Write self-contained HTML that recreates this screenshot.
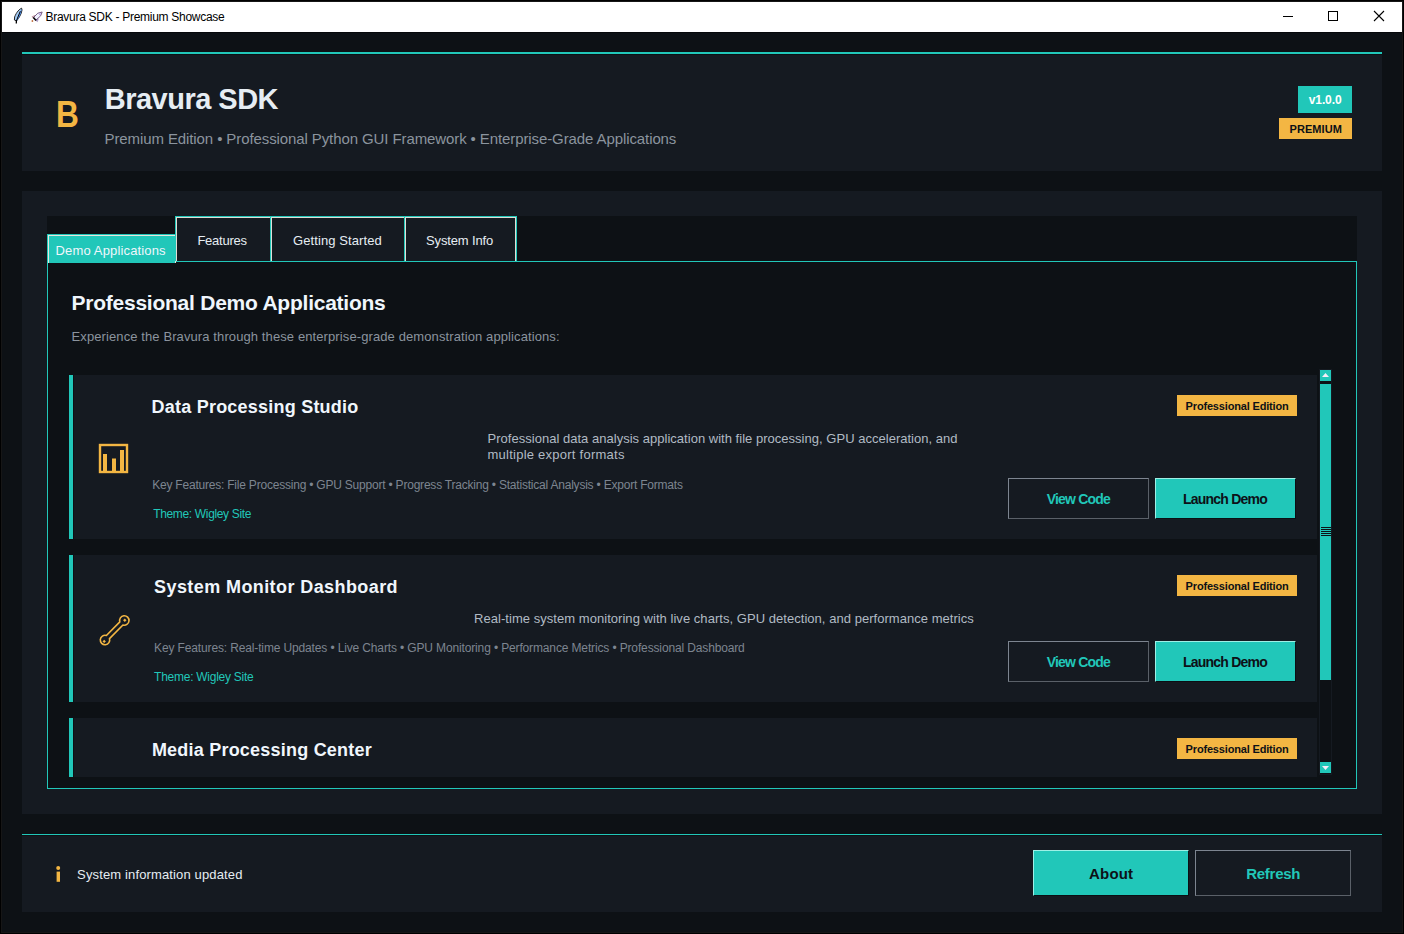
<!DOCTYPE html>
<html><head><meta charset="utf-8">
<style>
*{margin:0;padding:0;box-sizing:border-box}
html,body{width:1404px;height:934px;overflow:hidden;background:#000}
body{position:relative;font-family:"Liberation Sans",sans-serif}
.a{position:absolute}
.t{position:absolute;white-space:nowrap;line-height:1}
</style></head><body>
<div class="a" style="left:0;top:0;width:1404px;height:934px;background:#000"></div>
<div class="a" style="left:1px;top:1px;width:1402px;height:932px;background:#161616"></div>
<div class="a" style="left:2px;top:2px;width:1400px;height:930px;background:#0d1115"></div>
<!-- title bar -->
<div class="a" style="left:2px;top:2px;width:1400px;height:30px;background:#ffffff"></div>
<div class="a" style="left:2px;top:32px;width:1400px;height:1px;background:#06080b"></div>
<svg class="a" style="left:0;top:0" width="1404" height="34">
  <!-- feather -->
  <path d="M21.6 8.2 C19.5 9 16.5 12 14.6 17 L14.4 20 L16.5 21 C19 18 21.5 14 22 10 Z" fill="#a2caf4" stroke="#111" stroke-width="0.9"/>
  <path d="M21.4 9.2 C20 12.5 18.6 16 16.8 20.4 L17.3 20.6 C19.4 17.4 21 13.6 21.5 10 Z" fill="#3f83e6"/>
  <path d="M20.3 11.2 L16.3 21" stroke="#000" stroke-width="1"/>
  <path d="M16.4 20.5 L16.3 23.6" stroke="#000" stroke-width="1.3"/>
  <!-- rocket -->
  <path d="M35 15.6 L32.2 16.6 L33.2 18.2 Z" fill="#e6e6ff" stroke="#a05a5a" stroke-width="0.6"/>
  <path d="M38.2 18.8 L37.4 21.5 L35.9 20.3 Z" fill="#e6e6ff" stroke="#7a5aa0" stroke-width="0.6"/>
  <path d="M42.2 12 L37.8 13.2 L33.6 17.4 L35.9 20.1 L40.6 15.9 Z" fill="#f0f2ff" stroke="#5a3a6a" stroke-width="0.8"/>
  <path d="M33.4 17.6 L36 20.6" stroke="#000" stroke-width="1.5"/>
  <circle cx="40" cy="14.2" r="1" fill="#b8a0e8"/>
  <circle cx="32.4" cy="21" r="0.9" fill="#c07040"/>
  <!-- minimize -->
  <rect x="1283" y="16" width="10" height="1" fill="#000"/>
  <!-- maximize -->
  <rect x="1328.5" y="11.5" width="9" height="9" fill="none" stroke="#000" stroke-width="1"/>
  <!-- close -->
  <path d="M1374 11 L1384 21 M1384 11 L1374 21" stroke="#000" stroke-width="1.1"/>
</svg>

<!-- header panel -->
<div class="a" style="left:22px;top:52px;width:1360px;height:2px;background:#21c7b9"></div>
<div class="a" style="left:22px;top:55px;width:1360px;height:116px;background:#151a21"></div>
<div class="a" style="left:1298px;top:86px;width:54px;height:27px;background:#21c7b9"></div>
<div class="a" style="left:1279px;top:118px;width:73px;height:21px;background:#f3b643"></div>

<!-- main panel -->
<div class="a" style="left:22px;top:191px;width:1360px;height:623px;background:#151a21"></div>
<div class="a" style="left:47px;top:216px;width:1310px;height:46px;background:#0d1115"></div>
<div class="a" style="left:47px;top:261px;width:1310px;height:528px;background:#0d1115;border:1px solid #21c7b9"></div>

<!-- tabs -->
<div class="a" style="left:47px;top:234px;width:129px;height:29px;background:#21c7b9;border-top:1px solid #21c7b9;border-left:1px solid #21c7b9;box-shadow:inset 1px 1px 0 #e8e6dc,inset -1px 0 0 #e8e6dc"></div>
<div class="a" style="left:175px;top:216px;width:96px;height:45px;background:#151a21;border-top:1px solid #21c7b9;border-left:1px solid #21c7b9;box-shadow:inset 1px 1px 0 #e0ddd5,inset -1px 0 0 #e0ddd5"></div>
<div class="a" style="left:270px;top:216px;width:135px;height:45px;background:#151a21;border-top:1px solid #21c7b9;border-left:1px solid #21c7b9;box-shadow:inset 1px 1px 0 #e0ddd5,inset -1px 0 0 #e0ddd5"></div>
<div class="a" style="left:404px;top:216px;width:113px;height:45px;background:#151a21;border-top:1px solid #21c7b9;border-left:1px solid #21c7b9;border-right:1px solid #21c7b9;box-shadow:inset 1px 1px 0 #e0ddd5,inset -1px 0 0 #e0ddd5"></div>

<!-- cards (clipped) -->
<div class="a" style="left:48px;top:262px;width:1308px;height:515px;overflow:hidden">
  <div class="a" style="left:21px;top:113px;width:4px;height:164px;background:#21c7b9"></div>
  <div class="a" style="left:26px;top:113px;width:1243px;height:164px;background:#151a21"></div>
  <div class="a" style="left:21px;top:293px;width:4px;height:147px;background:#21c7b9"></div>
  <div class="a" style="left:26px;top:293px;width:1243px;height:147px;background:#151a21"></div>
  <div class="a" style="left:21px;top:456px;width:4px;height:100px;background:#21c7b9"></div>
  <div class="a" style="left:26px;top:456px;width:1243px;height:100px;background:#151a21"></div>
</div>

<!-- card 1 widgets -->
<svg class="a" style="left:96px;top:440px" width="36" height="36">
  <rect x="4" y="5" width="27" height="27" fill="none" stroke="#f3b643" stroke-width="2.4"/>
  <rect x="7" y="14" width="4" height="18" fill="#f3b643"/>
  <rect x="16" y="18.5" width="4" height="14" fill="#f3b643"/>
  <rect x="24" y="10" width="4" height="22" fill="#f3b643"/>
</svg>
<div class="a" style="left:1177px;top:395px;width:120px;height:21px;background:#f3b643"></div>
<div class="a" style="left:1008px;top:478px;width:141px;height:41px;background:#151a21;border:1px solid #7d8590;border-right-color:#5a6068;border-bottom-color:#5a6068"></div>
<div class="a" style="left:1155px;top:478px;width:141px;height:41px;background:#21c7b9;border:1px solid #9ef0e6;border-right-color:#0b0f14;border-bottom-color:#0b0f14"></div>

<!-- card 2 widgets -->
<svg class="a" style="left:96px;top:611px" width="38" height="38">
  <path d="M10.38 24.51 L23.81 10.88 A4.7 4.7 0 1 1 26.92 13.99 L13.49 27.62 A4.7 4.7 0 1 1 10.38 24.51 Z" fill="none" stroke="#f3b643" stroke-width="1.6" stroke-linejoin="round"/>
  <rect x="27.6" y="8" width="2.4" height="2.4" fill="#f3b643" transform="rotate(45 28.8 9.2)"/>
  <rect x="7" y="29.2" width="2.4" height="2.4" fill="#f3b643" transform="rotate(45 8.2 30.4)"/>
</svg>
<div class="a" style="left:1177px;top:575px;width:120px;height:21px;background:#f3b643"></div>
<div class="a" style="left:1008px;top:641px;width:141px;height:41px;background:#151a21;border:1px solid #7d8590;border-right-color:#5a6068;border-bottom-color:#5a6068"></div>
<div class="a" style="left:1155px;top:641px;width:141px;height:41px;background:#21c7b9;border:1px solid #9ef0e6;border-right-color:#0b0f14;border-bottom-color:#0b0f14"></div>

<!-- card 3 badge -->
<div class="a" style="left:1177px;top:738px;width:120px;height:21px;background:#f3b643"></div>

<!-- scrollbar -->
<div class="a" style="left:1319px;top:369px;width:13px;height:406px;background:#0d1115;border:1px solid #151a21"></div>
<div class="a" style="left:1320px;top:370px;width:11px;height:11px;background:#21c7b9"></div>
<svg class="a" style="left:1320px;top:370px" width="11" height="11"><path d="M2 7 L5.5 3 L9 7 Z" fill="#f4eef8"/></svg>
<div class="a" style="left:1320px;top:384px;width:11px;height:296px;background:#21c7b9"></div>
<div class="a" style="left:1321px;top:527px;width:10px;height:1px;background:#0d1115"></div>
<div class="a" style="left:1321px;top:529px;width:10px;height:1px;background:#0d1115"></div>
<div class="a" style="left:1321px;top:531px;width:10px;height:1px;background:#0d1115"></div>
<div class="a" style="left:1321px;top:533px;width:10px;height:1px;background:#0d1115"></div>
<div class="a" style="left:1321px;top:535px;width:10px;height:1px;background:#0d1115"></div>
<div class="a" style="left:1320px;top:762px;width:11px;height:11px;background:#21c7b9"></div>
<svg class="a" style="left:1320px;top:762px" width="11" height="11"><path d="M2 4 L5.5 8 L9 4 Z" fill="#f4eef8"/></svg>

<!-- status bar -->
<div class="a" style="left:22px;top:834px;width:1360px;height:1px;background:#21c7b9"></div>
<div class="a" style="left:22px;top:836px;width:1360px;height:76px;background:#151a21"></div>
<svg class="a" style="left:50px;top:860px" width="16" height="26">
  <circle cx="8.2" cy="8" r="2" fill="#f3b643"/>
  <rect x="6.6" y="11.6" width="3.4" height="10.2" fill="#f3b643"/>
</svg>
<div class="a" style="left:1033px;top:850px;width:156px;height:46px;background:#21c7b9;border:1px solid #9ef0e6;border-right-color:#0b0f14;border-bottom-color:#0b0f14"></div>
<div class="a" style="left:1195px;top:850px;width:156px;height:46px;background:#151a21;border:1px solid #7d8590;border-right-color:#5a6068;border-bottom-color:#5a6068"></div>

<div id="tt" class="t" style="left:45.50px;top:10.82px;font-size:12px;font-weight:normal;color:#000000;letter-spacing:-0.283px">Bravura SDK - Premium Showcase</div>
<div id="logoB" class="t" style="left:55.90px;top:97.01px;font-size:36px;font-weight:bold;color:#f3b643;letter-spacing:0.000px;transform:scaleX(0.88);transform-origin:0 0">B</div>
<div id="h1" class="t" style="left:104.80px;top:84.71px;font-size:29px;font-weight:bold;color:#e6edf3;letter-spacing:-0.520px">Bravura SDK</div>
<div id="sub" class="t" style="left:104.50px;top:130.60px;font-size:15px;font-weight:normal;color:#8b949e;letter-spacing:-0.098px">Premium Edition • Professional Python GUI Framework • Enterprise-Grade Applications</div>
<div id="ver" class="t" style="left:1308.80px;top:93.91px;font-size:12px;font-weight:bold;color:#ffffff;letter-spacing:-0.120px">v1.0.0</div>
<div id="prem" class="t" style="left:1289.50px;top:123.91px;font-size:11px;font-weight:bold;color:#0d1117;letter-spacing:0.067px">PREMIUM</div>
<div id="tab1" class="t" style="left:55.50px;top:243.90px;font-size:13px;font-weight:normal;color:#f0f6fc;letter-spacing:0.150px">Demo Applications</div>
<div id="tab2" class="t" style="left:197.40px;top:234.10px;font-size:13px;font-weight:normal;color:#e6edf3;letter-spacing:-0.229px">Features</div>
<div id="tab3" class="t" style="left:293.10px;top:234.10px;font-size:13px;font-weight:normal;color:#e6edf3;letter-spacing:0.086px">Getting Started</div>
<div id="tab4" class="t" style="left:426.00px;top:234.10px;font-size:13px;font-weight:normal;color:#e6edf3;letter-spacing:-0.140px">System Info</div>
<div id="h2" class="t" style="left:71.50px;top:291.81px;font-size:21px;font-weight:bold;color:#f0f6fc;letter-spacing:-0.241px">Professional Demo Applications</div>
<div id="exp" class="t" style="left:71.50px;top:329.90px;font-size:13px;font-weight:normal;color:#8b949e;letter-spacing:0.103px">Experience the Bravura through these enterprise-grade demonstration applications:</div>
<div id="c1t" class="t" style="left:151.60px;top:397.71px;font-size:18px;font-weight:bold;color:#f0f6fc;letter-spacing:0.219px">Data Processing Studio</div>
<div id="c1d1" class="t" style="left:487.50px;top:431.60px;font-size:13px;font-weight:normal;color:#b1bac4;letter-spacing:0.022px">Professional data analysis application with file processing, GPU acceleration, and</div>
<div id="c1d2" class="t" style="left:487.50px;top:448.21px;font-size:13px;font-weight:normal;color:#b1bac4;letter-spacing:0.245px">multiple export formats</div>
<div id="c1k" class="t" style="left:152.20px;top:479.10px;font-size:12px;font-weight:normal;color:#7d8590;letter-spacing:-0.212px">Key Features: File Processing • GPU Support • Progress Tracking • Statistical Analysis • Export Formats</div>
<div id="c1th" class="t" style="left:153.20px;top:508.10px;font-size:12px;font-weight:normal;color:#21c7b9;letter-spacing:-0.341px">Theme: Wigley Site</div>
<div id="c1b" class="t" style="left:1185.60px;top:400.70px;font-size:11px;font-weight:bold;color:#0d1117;letter-spacing:-0.168px">Professional Edition</div>
<div id="c1v" class="t" style="left:1046.80px;top:492.21px;font-size:14px;font-weight:bold;color:#21c7b9;letter-spacing:-0.825px">View Code</div>
<div id="c1l" class="t" style="left:1182.90px;top:492.21px;font-size:14px;font-weight:bold;color:#0d1117;letter-spacing:-0.760px">Launch Demo</div>
<div id="c2t" class="t" style="left:154.10px;top:578.10px;font-size:18px;font-weight:bold;color:#f0f6fc;letter-spacing:0.409px">System Monitor Dashboard</div>
<div id="c2d" class="t" style="left:474.10px;top:612.40px;font-size:13px;font-weight:normal;color:#b1bac4;letter-spacing:0.041px">Real-time system monitoring with live charts, GPU detection, and performance metrics</div>
<div id="c2k" class="t" style="left:154.10px;top:641.91px;font-size:12px;font-weight:normal;color:#7d8590;letter-spacing:-0.139px">Key Features: Real-time Updates • Live Charts • GPU Monitoring • Performance Metrics • Professional Dashboard</div>
<div id="c2th" class="t" style="left:154.10px;top:671.10px;font-size:12px;font-weight:normal;color:#21c7b9;letter-spacing:-0.259px">Theme: Wigley Site</div>
<div id="c2b" class="t" style="left:1185.60px;top:580.70px;font-size:11px;font-weight:bold;color:#0d1117;letter-spacing:-0.168px">Professional Edition</div>
<div id="c2v" class="t" style="left:1046.80px;top:655.21px;font-size:14px;font-weight:bold;color:#21c7b9;letter-spacing:-0.825px">View Code</div>
<div id="c2l" class="t" style="left:1182.90px;top:655.21px;font-size:14px;font-weight:bold;color:#0d1117;letter-spacing:-0.760px">Launch Demo</div>
<div id="c3t" class="t" style="left:151.90px;top:741.01px;font-size:18px;font-weight:bold;color:#f0f6fc;letter-spacing:0.218px">Media Processing Center</div>
<div id="c3b" class="t" style="left:1185.60px;top:743.70px;font-size:11px;font-weight:bold;color:#0d1117;letter-spacing:-0.168px">Professional Edition</div>
<div id="st" class="t" style="left:77.10px;top:868.31px;font-size:13px;font-weight:normal;color:#e6edf3;letter-spacing:0.136px">System information updated</div>
<div id="about" class="t" style="left:1089.00px;top:865.81px;font-size:15px;font-weight:bold;color:#0d1117;letter-spacing:0.200px">About</div>
<div id="refresh" class="t" style="left:1246.20px;top:865.81px;font-size:15px;font-weight:bold;color:#21c7b9;letter-spacing:-0.267px">Refresh</div>
</body></html>
